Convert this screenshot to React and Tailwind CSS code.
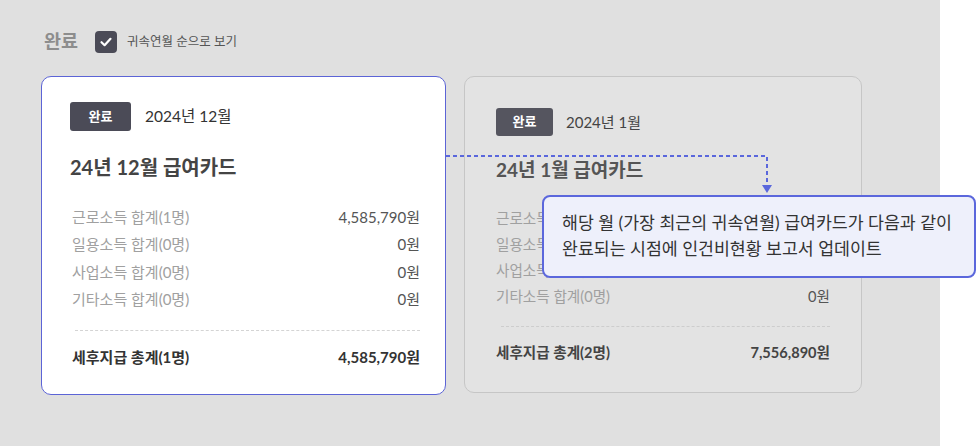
import React from "react";

const font = { fontFamily: 'Lato, "Noto Sans CJK KR", "Noto Sans", sans-serif' };

function Row1({ label, value }) {
  return (
    <div className="flex justify-between items-center h-[27.5px] text-[15px]">
      <span className="text-[#a0a0a0]">{label}</span>
      <span className="text-[#555]">{value}</span>
    </div>
  );
}

function Row2({ label, value }) {
  return (
    <div className="flex justify-between items-center h-[26px] text-[14.6px]">
      <span className="text-[#a0a0a0]">{label}</span>
      <span className="text-[#555]">{value}</span>
    </div>
  );
}

export default function App() {
  return (
    <div className="relative w-[977px] h-[446px] bg-white overflow-hidden flex" style={font}>
      <div className="w-[940px] h-full bg-[#e0e0e0] pl-[41px] pt-[27px]">
        <div className="flex items-center h-[30px] ml-[3px]">
          <span className="text-[18.5px] font-bold text-[#8d8d8d]">완료</span>
          <div className="ml-[17px] w-[22px] h-[22px] rounded-[4px] bg-[#4b4b57] flex items-center justify-center">
            <svg width="14" height="14" viewBox="0 0 14 14">
              <path d="M2.5 7.2 L5.6 10.2 L11.5 3.8" fill="none" stroke="white" strokeWidth="2.2" strokeLinecap="round" strokeLinejoin="round" />
            </svg>
          </div>
          <span className="ml-[10px] text-[12.5px] text-[#555]">귀속연월 순으로 보기</span>
        </div>

        <div className="flex items-start gap-[18px] mt-[19px]">
          <div className="w-[405px] h-[319px] bg-white border border-[#5c64d6] rounded-[10px] pt-[25px] pl-[28px] pr-[25px]">
            <div className="flex items-center">
              <div className="w-[61px] h-[29px] rounded-[3px] bg-[#4b4b57] text-white text-[13px] font-bold flex items-center justify-center">완료</div>
              <span className="ml-[14px] text-[15.5px] text-[#333]">2024년 12월</span>
            </div>
            <div className="mt-[24px] h-[24px] flex items-center text-[20px] font-bold text-[#444]">24년 12월 급여카드</div>
            <div className="mt-[24px] pl-[2px]">
              <Row1 label="근로소득 합계(1명)" value="4,585,790원" />
              <Row1 label="일용소득 합계(0명)" value="0원" />
              <Row1 label="사업소득 합계(0명)" value="0원" />
              <Row1 label="기타소득 합계(0명)" value="0원" />
            </div>
            <div className="mt-[17px] ml-[5px] border-t border-dashed border-[#d4d4d4]" />
            <div className="mt-[14px] pl-[2px] h-[24px] flex justify-between items-center text-[15px] font-bold text-[#333]">
              <span>세후지급 총계(1명)</span>
              <span>4,585,790원</span>
            </div>
          </div>

          <div className="w-[398px] h-[317px] bg-[#e3e3e3] border border-[#c6c6c6] rounded-[10px] pt-[31px] pl-[31px] pr-[31px]">
            <div className="flex items-center">
              <div className="w-[57px] h-[28px] rounded-[3px] bg-[#55555f] text-white text-[13px] font-bold flex items-center justify-center">완료</div>
              <span className="ml-[13px] text-[15px] text-[#444]">2024년 1월</span>
            </div>
            <div className="mt-[22px] h-[24px] flex items-center text-[19px] font-bold text-[#555]">24년 1월 급여카드</div>
            <div className="mt-[24px]">
              <Row2 label="근로소득 합계(1명)" value="4,585,790원" />
              <Row2 label="일용소득 합계(0명)" value="0원" />
              <Row2 label="사업소득 합계(0명)" value="0원" />
              <Row2 label="기타소득 합계(0명)" value="0원" />
            </div>
            <div className="mt-[16px] ml-[5px] border-t border-dashed border-[#cdcdcd]" />
            <div className="mt-[14px] h-[24px] flex justify-between items-center text-[14.6px] font-bold text-[#444]">
              <span>세후지급 총계(2명)</span>
              <span>7,556,890원</span>
            </div>
          </div>
        </div>
      </div>

      <svg className="absolute left-[446px] top-[150px]" width="334" height="46" viewBox="0 0 334 46">
        <path d="M0 6 H321 V36" fill="none" stroke="#5a67dc" strokeWidth="2" strokeDasharray="4 3" />
        <path d="M316 35 L326 35 L321 43 Z" fill="#5a67dc" />
      </svg>

      <div className="absolute left-[542px] top-[195px] w-[434px] h-[83px] bg-[#eef0fb] border-2 border-[#5b67dc] rounded-[8px] pt-[13px] pl-[18px] text-[17.3px] leading-[26px] text-[#333] whitespace-nowrap">
        <div>해당 월 (가장 최근의 귀속연월) 급여카드가 다음과 같이</div>
        <div>완료되는 시점에 인건비현황 보고서 업데이트</div>
      </div>
    </div>
  );
}
